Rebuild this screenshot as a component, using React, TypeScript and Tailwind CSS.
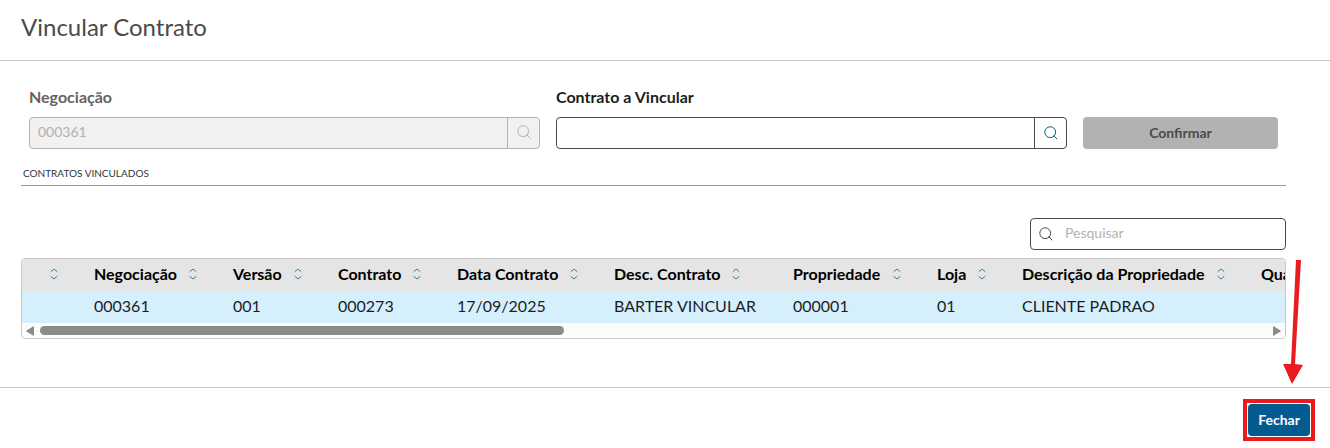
import React from "react";

const columns = [
	{ label: "", value: "", width: "w-[56px]", inner: "w-full" },
	{ label: "Negociação", value: "000361", width: "w-[139px]", inner: "w-full" },
	{ label: "Versão", value: "001", width: "w-[105px]", inner: "w-full" },
	{ label: "Contrato", value: "000273", width: "w-[119px]", inner: "w-full" },
	{ label: "Data Contrato", value: "17/09/2025", width: "w-[157px]", inner: "w-full" },
	{ label: "Desc. Contrato", value: "BARTER VINCULAR", width: "w-[179px]", inner: "w-[130px]" },
	{ label: "Propriedade", value: "000001", width: "w-[144px]", inner: "w-full" },
	{ label: "Loja", value: "01", width: "w-[85px]", inner: "w-full" },
	{ label: "Descrição da Propriedade", value: "CLIENTE PADRAO", width: "w-[239px]", inner: "w-full" },
	{ label: "Quantidade", value: "", width: "w-[160px]", inner: "w-full" },
];

function SearchIcon() {
	return (
		<svg viewBox="0 0 16 16" className="size-4" fill="none" stroke="currentColor" aria-hidden="true">
			<circle cx="7.2" cy="7.2" r="5.4" />
			<path d="M11 11L14 14" strokeLinecap="round" />
		</svg>
	);
}

function SortIcon() {
	return (
		<svg
			viewBox="0 0 8 12"
			className="h-3 w-4 shrink-0 text-[#2f80ab]"
			fill="none"
			stroke="currentColor"
			strokeLinecap="round"
			strokeLinejoin="round"
			aria-hidden="true"
		>
			<path d="M1 3.5L4 1L7 3.5M1 8.5L4 11L7 8.5" />
		</svg>
	);
}

export default function VincularContrato() {
	return (
		<div className="bg-white font-['Lato',sans-serif] text-base text-black">
			<header className="flex h-[61px] items-center border-b border-[#c6c6c6] px-[21px] pb-1.5">
				<h1 className="text-2xl text-[#4a4a4a]">Vincular Contrato</h1>
			</header>

			<main className="pt-6 pr-11 pb-12 pl-[21px]">
				<form className="grid grid-cols-[511fr_511fr_195fr] items-end gap-4 px-2">
					<div>
						<label htmlFor="negociacao" className="block pb-2 font-bold text-[#636363]">
							Negociação
						</label>
						<div className="flex h-8 overflow-hidden rounded border border-[#b2b2b2] bg-[#f1f1f1] text-[#b2b2b2]">
							<input
								id="negociacao"
								type="text"
								defaultValue="000361"
								disabled
								className="min-w-0 flex-1 px-2 pb-0.5 text-sm"
							/>
							<button
								type="button"
								aria-label="Pesquisar negociação"
								disabled
								className="flex w-8 justify-center border-l border-[#b2b2b2] pt-1.5"
							>
								<SearchIcon />
							</button>
						</div>
					</div>
					<div>
						<label htmlFor="contrato" className="block pb-2 font-bold text-[#1d1d1d]">
							Contrato a Vincular
						</label>
						<div className="flex h-8 overflow-hidden rounded border border-[#4a4a4a]">
							<input id="contrato" type="text" className="min-w-0 flex-1 px-2 pb-0.5 text-sm outline-none" />
							<button
								type="button"
								aria-label="Pesquisar contrato"
								className="flex w-8 items-center justify-center border-l border-[#4a4a4a] text-[#045b8f]"
							>
								<SearchIcon />
							</button>
						</div>
					</div>
					<button type="button" disabled className="h-8 rounded bg-[#b2b2b2] text-sm font-bold text-[#4a4a4a]">
						Confirmar
					</button>
				</form>

				<h2 className="mt-4 border-b border-[#999999] pb-1 text-[10px] leading-4 text-[#2c3739]">
					<span className="pl-0.5">CONTRATOS VINCULADOS</span>
				</h2>

				<div className="mt-8 flex justify-end">
					<label className="flex h-8 w-64 items-center rounded border border-[#4a4a4a] text-[#4a4a4a]">
						<span className="flex w-[34px] justify-center pr-1">
							<SearchIcon />
						</span>
						<input
							type="text"
							aria-label="Pesquisar"
							placeholder="Pesquisar"
							className="min-w-0 flex-1 pb-0.5 text-sm outline-none placeholder:text-[#b2b2b2]"
						/>
					</label>
				</div>

				<div className="mt-2 overflow-hidden rounded border border-[#c6c6c6]">
					<div className="overflow-hidden">
						<table className="w-[1383px] table-fixed border-collapse text-left">
							<thead className="bg-[#e5e5e5]">
								<tr>
									{columns.map((column) => (
										<th key={column.label} className={`h-8 px-4 pt-0 pb-0.5 whitespace-nowrap ${column.width}`}>
											<div className={`flex items-center justify-between ${column.inner}`}>
												<span>{column.label}</span>
												<SortIcon />
											</div>
										</th>
									))}
								</tr>
							</thead>
							<tbody className="bg-[#d6effd] text-[#1d1d1d]">
								<tr>
									{columns.map((column) => (
										<td key={column.label} className="h-8 px-4 pt-0 pb-0.5 whitespace-nowrap">
											{column.value}
										</td>
									))}
								</tr>
							</tbody>
						</table>
					</div>
					<div className="flex h-[15px] items-center gap-1.5 bg-[#fcfcfc] px-1 text-[#8b8b8b]">
						<svg viewBox="0 0 8 10" className="h-2.5 w-2" fill="currentColor" aria-hidden="true">
							<path d="M8 1v8q0 1-1 .5L.5 5.5Q0 5 .5 4.5L7 .5Q8 0 8 1Z" />
						</svg>
						<div className="flex-1">
							<div className="h-[9px] w-[42.7%] rounded-full bg-[#8b8b8b]" />
						</div>
						<svg viewBox="0 0 8 10" className="h-2.5 w-2" fill="currentColor" aria-hidden="true">
							<path d="M0 1v8q0 1 1 .5L7.5 5.5Q8 5 7.5 4.5L1 .5Q0 0 0 1Z" />
						</svg>
					</div>
				</div>
			</main>

			<footer className="flex justify-end border-t border-[#c6c6c6] pt-[11px] pr-[15px] pb-1">
				<div className="relative border-4 border-[#e81b1f] p-px">
					<button type="button" className="h-8 w-[62px] rounded bg-[#045b8f] text-sm font-bold text-white">
						Fechar
					</button>
					<svg
						viewBox="0 0 20 124"
						className="absolute right-2 bottom-[53px] h-[124px] w-5"
						fill="#e81b1f"
						aria-hidden="true"
					>
						<path d="M13 0L18 0L12 104L20 105L9 124L0 104L8 104Z" />
					</svg>
				</div>
			</footer>
		</div>
	);
}
